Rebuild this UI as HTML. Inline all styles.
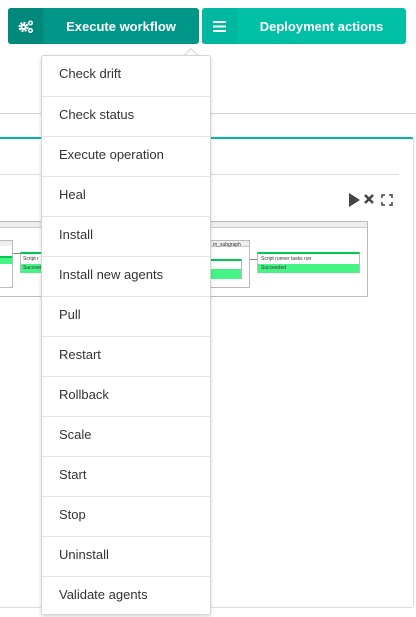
<!DOCTYPE html>
<html><head><meta charset="utf-8"><style>
*{box-sizing:border-box;margin:0;padding:0}
body{width:416px;height:617px;overflow:hidden;background:#fff;font-family:"Liberation Sans",sans-serif;position:relative}
.btn{position:absolute;top:8px;height:36px;border-radius:3px;color:#fff;font-weight:bold;font-size:13px;display:flex;align-items:center;overflow:hidden}
.ico{width:35px;height:100%;display:flex;align-items:center;justify-content:center}
.lbl{flex:1;text-align:center}
.menu{position:absolute;left:41px;top:55px;width:170px;height:560px;background:#fff;border:1px solid #d4d4d5;border-radius:3px;box-shadow:0 2px 4px rgba(0,0,0,.15)}
.menu div{height:40px;line-height:36px;padding-left:17px;font-size:13px;color:#333;border-top:1px solid #e5e5e5}
.menu div:first-child{border-top:none}
.arrow{position:absolute;left:186px;top:50px;width:10px;height:10px;background:#fff;border-left:1px solid #d4d4d5;border-top:1px solid #d4d4d5;transform:rotate(45deg)}
.small{position:absolute;font-size:5px;color:#333}
</style></head><body>
<div class="btn" style="left:8px;width:191px;background:#009688">
 <div class="ico" style="background:#00897b"><svg width="16" height="13" viewBox="0 0 16 13"><circle cx="5.5" cy="7" r="3.6" fill="none" stroke="#fff" stroke-width="3" stroke-dasharray="1.8 1"/><circle cx="5.5" cy="7" r="3" fill="#fff"/><circle cx="5.5" cy="7" r="1.1" fill="#00897b"/><circle cx="12.5" cy="3" r="1.8" fill="none" stroke="#fff" stroke-width="1.5"/><circle cx="12.5" cy="10.5" r="1.8" fill="none" stroke="#fff" stroke-width="1.5"/></svg></div>
 <div class="lbl">Execute workflow</div></div>
<div class="btn" style="left:202px;width:204px;background:#00bfa5">
 <div class="ico" style="background:#00b89f"><svg width="13" height="11" viewBox="0 0 13 11"><rect y="0" width="13" height="2" fill="#fff"/><rect y="4.5" width="13" height="2" fill="#fff"/><rect y="9" width="13" height="2" fill="#fff"/></svg></div>
 <div class="lbl">Deployment actions</div></div>
<div style="position:absolute;left:0;top:113px;width:416px;height:1px;background:#d4d4d5"></div>
<div style="position:absolute;left:-3px;top:137px;width:417px;height:471px;border:1px solid #ddd;border-top:2px solid #00b5ad;border-radius:3px"></div>
<div style="position:absolute;left:0;top:174px;width:399px;height:1px;background:#ddd"></div>
<svg style="position:absolute;left:348px;top:192px" width="48" height="16" viewBox="0 0 48 16"><path d="M1 1L12 8L1 15Z" fill="#444"/><path d="M17 3l8 8M25 3l-8 8" stroke="#444" stroke-width="2.5"/><path d="M34 6V3h3M41 3h3v3M44 10v3h-3M37 13h-3v-3" stroke="#444" stroke-width="1.6" fill="none"/></svg>
<div style="position:absolute;left:-2px;top:221px;width:370px;height:76px;border:1px solid #bbb;background:#fff"><div style="height:6px;background:#eee;border-bottom:1px solid #ccc"></div></div>
<div style="position:absolute;left:-2px;top:240px;width:15px;height:48px;border:1px solid #bbb"><div style="height:5px;background:#eee"></div><div style="margin-top:10px;height:8px;background:#44f585;border-top:2px solid #00c853"></div></div>
<div style="position:absolute;left:13px;top:253px;width:7px;height:1px;background:#888"></div>
<div style="position:absolute;left:20px;top:252px;width:25px;height:21px;border:1px solid #bbb;border-top:2px solid #00c853"><div class="small" style="left:2px;top:2px">Script r</div><div style="position:absolute;top:10px;left:0;right:0;height:9px;background:#44f585"></div><div class="small" style="left:2px;top:11px">Succeed</div></div>
<div style="position:absolute;left:210px;top:240px;width:40px;height:48px;border:1px solid #bbb"><div style="height:6px;background:#eee;border-bottom:1px solid #ccc"></div><div class="small" style="left:2px;top:1px">m_subgraph</div><div style="margin-top:12px;width:31px;height:20px;border-top:2px solid #00c853;border-right:1px solid #bbb"><div style="margin-top:8px;height:10px;background:#44f585"></div></div></div>
<div style="position:absolute;left:250px;top:259px;width:7px;height:1px;background:#888"></div>
<div style="position:absolute;left:257px;top:252px;width:103px;height:21px;border:1px solid #bbb;border-top:2px solid #00c853"><div class="small" style="left:3px;top:2px">Script runner tasks run</div><div style="position:absolute;top:10px;left:0;right:0;height:9px;background:#44f585"></div><div class="small" style="left:3px;top:11px">Succeeded</div></div>
<div class="arrow"></div>
<div class="menu">
<div>Check drift</div><div>Check status</div><div>Execute operation</div><div>Heal</div><div>Install</div><div>Install new agents</div><div>Pull</div><div>Restart</div><div>Rollback</div><div>Scale</div><div>Start</div><div>Stop</div><div>Uninstall</div><div>Validate agents</div>
</div>
</body></html>
